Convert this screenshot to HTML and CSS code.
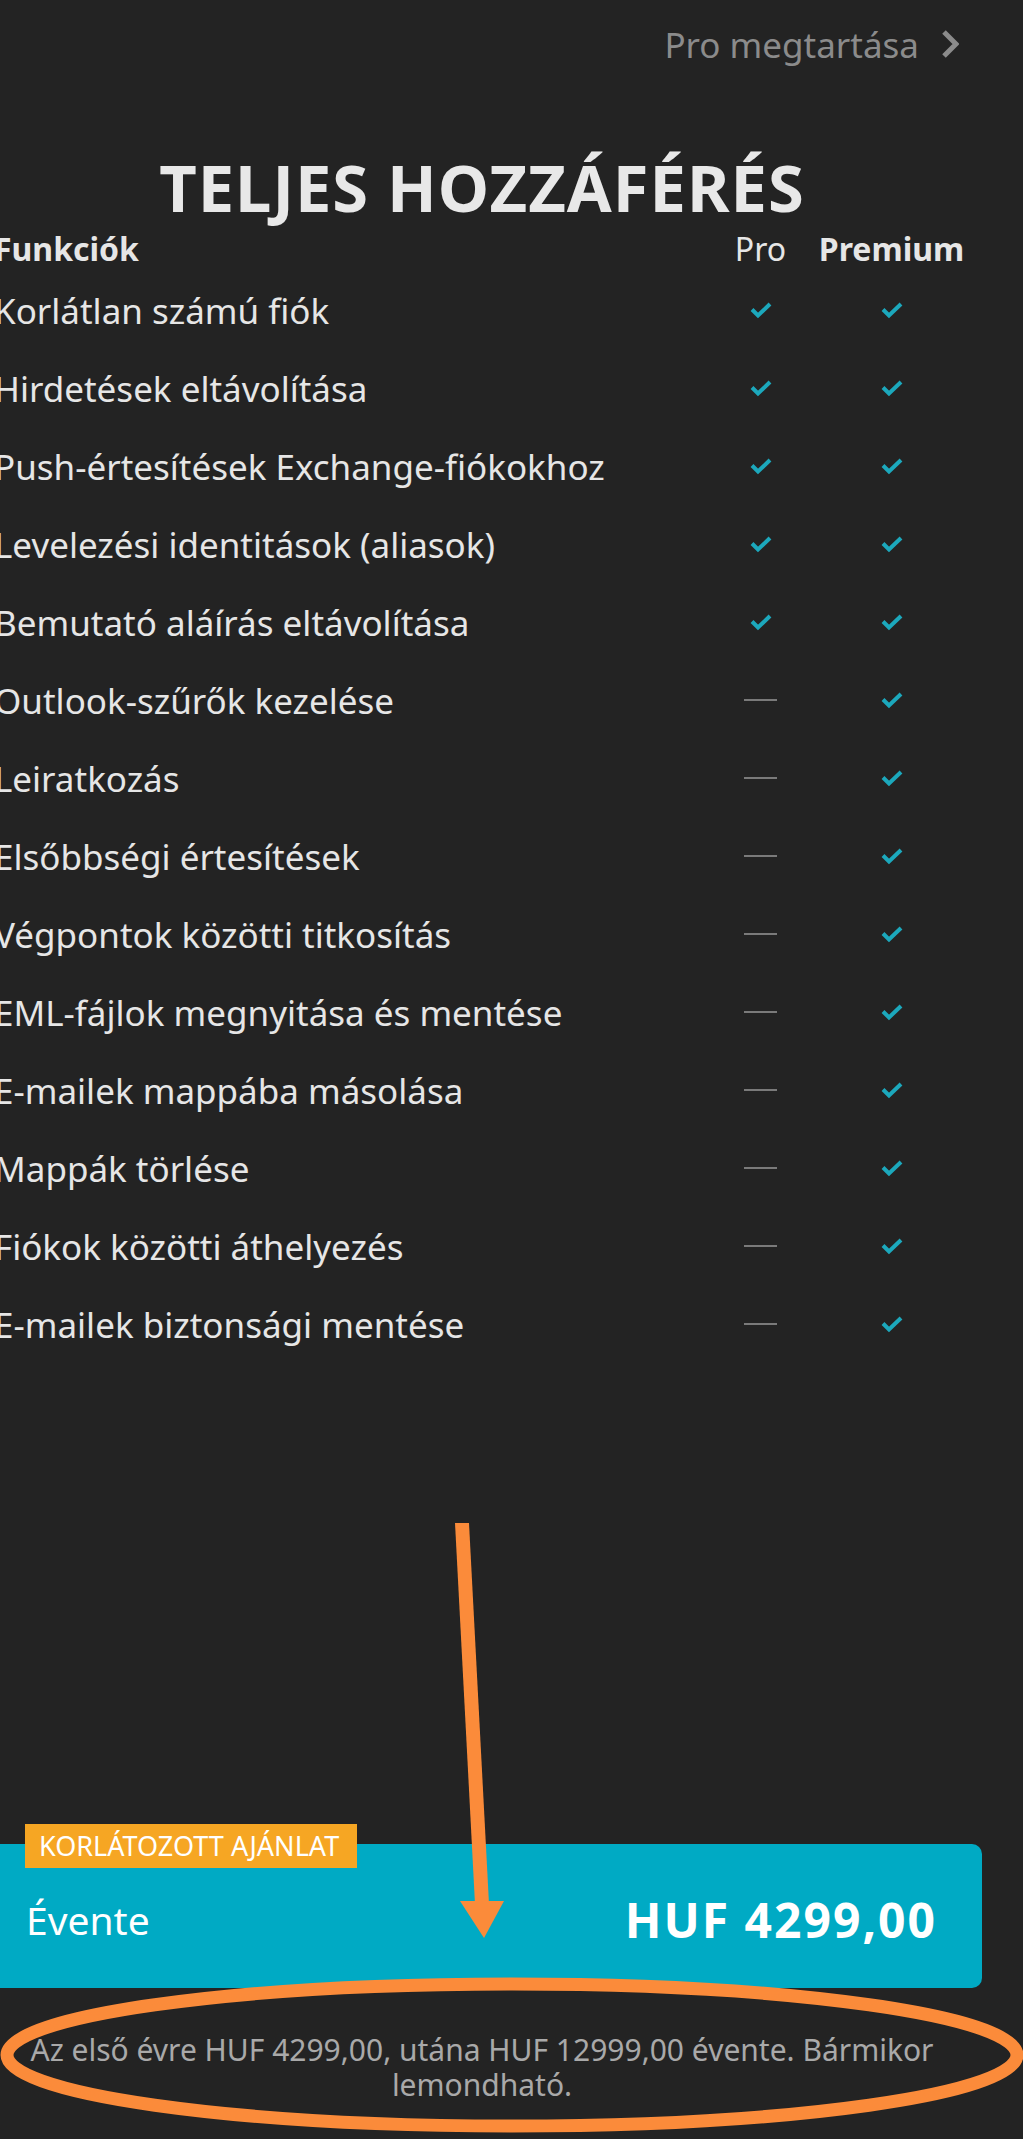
FILE: index.html
```html
<!DOCTYPE html>
<html lang="hu">
<head>
  <meta charset="UTF-8" />
  <meta name="viewport" content="width=device-width, initial-scale=1">
  <title>Teljes hozzáférés</title>
  <link rel="stylesheet" href="styles.css">
</head>
<body>

  <div class="screen">
    <div class="topbar">
      <a class="keep-link" href="#">Pro megtartása
        <svg class="chevron" width="18" height="30" viewBox="0 0 18 30"><polyline points="3,3 15,15 3,27" /></svg>
      </a>
    </div>

    <h1 class="title">TELJES HOZZÁFÉRÉS</h1>

    <div class="features">
      <div class="row head">
        <span class="name">Funkciók</span>
        <span class="col pro">Pro</span>
        <span class="col premium">Premium</span>
      </div>
      <div class="row"><span class="name">Korlátlan számú fiók</span><span class="col"><i class="check"></i></span><span class="col"><i class="check"></i></span></div>
      <div class="row"><span class="name">Hirdetések eltávolítása</span><span class="col"><i class="check"></i></span><span class="col"><i class="check"></i></span></div>
      <div class="row"><span class="name">Push-értesítések Exchange-fiókokhoz</span><span class="col"><i class="check"></i></span><span class="col"><i class="check"></i></span></div>
      <div class="row"><span class="name">Levelezési identitások (aliasok)</span><span class="col"><i class="check"></i></span><span class="col"><i class="check"></i></span></div>
      <div class="row"><span class="name">Bemutató aláírás eltávolítása</span><span class="col"><i class="check"></i></span><span class="col"><i class="check"></i></span></div>
      <div class="row"><span class="name">Outlook-szűrők kezelése</span><span class="col"><i class="dash"></i></span><span class="col"><i class="check"></i></span></div>
      <div class="row"><span class="name">Leiratkozás</span><span class="col"><i class="dash"></i></span><span class="col"><i class="check"></i></span></div>
      <div class="row"><span class="name">Elsőbbségi értesítések</span><span class="col"><i class="dash"></i></span><span class="col"><i class="check"></i></span></div>
      <div class="row"><span class="name">Végpontok közötti titkosítás</span><span class="col"><i class="dash"></i></span><span class="col"><i class="check"></i></span></div>
      <div class="row"><span class="name">EML-fájlok megnyitása és mentése</span><span class="col"><i class="dash"></i></span><span class="col"><i class="check"></i></span></div>
      <div class="row"><span class="name">E-mailek mappába másolása</span><span class="col"><i class="dash"></i></span><span class="col"><i class="check"></i></span></div>
      <div class="row"><span class="name">Mappák törlése</span><span class="col"><i class="dash"></i></span><span class="col"><i class="check"></i></span></div>
      <div class="row"><span class="name">Fiókok közötti áthelyezés</span><span class="col"><i class="dash"></i></span><span class="col"><i class="check"></i></span></div>
      <div class="row"><span class="name">E-mailek biztonsági mentése</span><span class="col"><i class="dash"></i></span><span class="col"><i class="check"></i></span></div>
    </div>

    <div class="purchase">
      <div class="plan">
        <span class="badge">KORLÁTOZOTT AJÁNLAT</span>
        <span class="plan-name">Évente</span>
        <span class="plan-price">HUF 4299,00</span>
      </div>
      <p class="terms">Az első évre HUF 4299,00, utána HUF 12999,00 évente. Bármikor lemondható.</p>
    </div>
  </div>

  <!-- annotation drawn over the screenshot -->
  <svg class="markup" width="1023" height="2139" viewBox="0 0 1023 2139">
    <polygon points="455,1523 469,1523 489,1904 475,1904" />
    <polygon points="460,1901 504,1901 484,1938" />
    <ellipse cx="512" cy="2055" rx="505" ry="71" />
  </svg>

</body>
</html>
```

FILE: styles.css
```css
* {
  box-sizing: border-box;
  margin: 0;
  padding: 0;
}

html, body {
  background: #232323;
}

body {
  font-family: "Noto Sans", "Open Sans", sans-serif;
  color: #e6e6e6;
  position: relative;
  width: 1023px;
  min-height: 2139px;
  overflow: hidden;
}

.screen {
  width: 1000px;
  margin-left: -18px;
  min-height: 2139px;
  display: flex;
  flex-direction: column;
}

.topbar {
  display: flex;
  justify-content: flex-end;
  padding: 22px 23px 0 0;
  height: 96px;
}

.keep-link {
  display: flex;
  align-items: center;
  gap: 22px;
  color: #8b8b8b;
  font-size: 35px;
  text-decoration: none;
  height: 44px;
}

.chevron polyline {
  fill: none;
  stroke: #8b8b8b;
  stroke-width: 5;
}

.title {
  text-align: center;
  font-size: 65px;
  font-weight: 700;
  letter-spacing: 1px;
  color: #e8e8e8;
  line-height: 72px;
  margin-top: 55px;
}

.features {
  margin-top: 2px;
  padding: 0 25px 0 12px;
}

.row {
  display: grid;
  grid-template-columns: 1fr 131px 131px;
  align-items: center;
  height: 78px;
  font-size: 35px;
}

.row.head {
  height: 46px;
  font-size: 32px;
}

.head .name,
.head .premium {
  font-weight: 700;
}

.name {
  white-space: nowrap;
}

.col {
  display: flex;
  justify-content: center;
  align-items: center;
}

.check {
  display: block;
  width: 22px;
  height: 17px;
  background: url("data:image/svg+xml;utf8,<svg xmlns='http://www.w3.org/2000/svg' width='22' height='17' viewBox='0 0 22 17'><polyline points='2,7.5 8,13.5 20,2' fill='none' stroke='%231ca8bc' stroke-width='4'/></svg>") no-repeat center;
}

.dash {
  display: block;
  width: 33px;
  height: 2px;
  background: #7a7a7a;
}

.purchase {
  margin-top: auto;
  padding-bottom: 37px;
}

.plan {
  position: relative;
  display: flex;
  justify-content: space-between;
  align-items: center;
  height: 144px;
  padding: 6px 45px 0 44px;
  background: #00aac4;
  border-radius: 10px;
  color: #fff;
}

.badge {
  position: absolute;
  top: -20px;
  left: 43px;
  background: #f6a623;
  color: #fff;
  font-size: 27px;
  line-height: 44px;
  padding: 0 14px;
  width: 332px;
  white-space: nowrap;
}

.plan-name {
  font-size: 39px;
}

.plan-price {
  font-size: 48px;
  font-weight: 700;
  letter-spacing: 2px;
}

.terms {
  margin-top: 44px;
  text-align: center;
  font-size: 30px;
  line-height: 35px;
  color: #a9a9a9;
  padding: 0 10px;
}

.markup {
  position: absolute;
  top: 0;
  left: 0;
  pointer-events: none;
}

.markup polygon {
  fill: #fb8b3a;
}

.markup ellipse {
  fill: none;
  stroke: #fb8b3a;
  stroke-width: 13;
}
```
